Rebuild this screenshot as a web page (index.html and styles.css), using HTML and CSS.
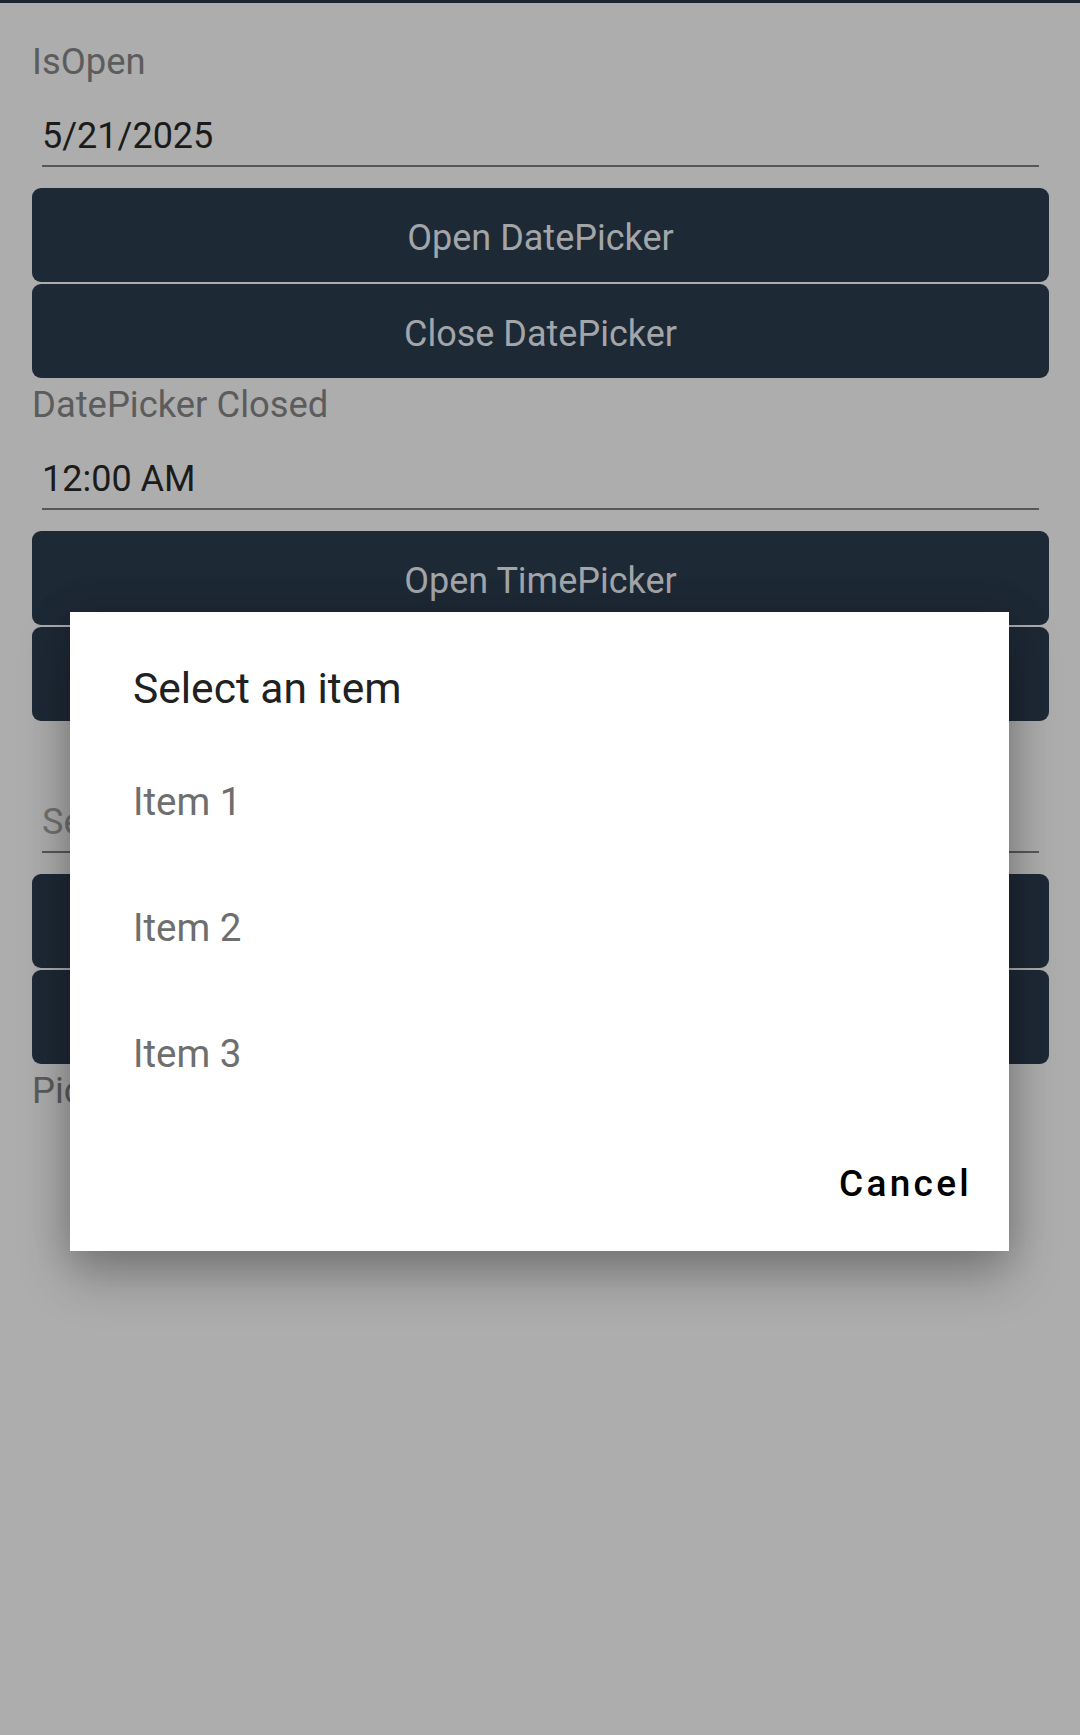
FILE: index.html
```html
<!DOCTYPE html>
<html lang="en">
<head>
<meta charset="utf-8">
<title>Picker sample</title>
<link rel="stylesheet" href="styles.css">
</head>
<body>
<div class="topbar"></div>
<main class="page">
  <div class="label label-first">IsOpen</div>
  <div class="entry">5/21/2025</div>
  <div class="btns">
    <div class="btn">Open DatePicker</div>
    <div class="btn">Close DatePicker</div>
  </div>
  <div class="label">DatePicker Closed</div>
  <div class="entry">12:00 AM</div>
  <div class="btns">
    <div class="btn">Open TimePicker</div>
    <div class="btn">Close TimePicker</div>
  </div>
  <div class="label"></div>
  <div class="entry entry-placeholder">Select an item</div>
  <div class="btns">
    <div class="btn">Open Picker</div>
    <div class="btn">Close Picker</div>
  </div>
  <div class="label">Picker Closed</div>
</main>

<div class="dialog">
  <div class="dialog-title">Select an item</div>
  <div class="dialog-list">
    <div class="dialog-item">Item 1</div>
    <div class="dialog-item">Item 2</div>
    <div class="dialog-item">Item 3</div>
  </div>
  <div class="dialog-actions">
    <div class="dialog-btn">Cancel</div>
  </div>
</div>
</body>
</html>
```
FILE: styles.css
```css
* {
  box-sizing: border-box;
}

html,
body {
  margin: 0;
  padding: 0;
}

body {
  width: 1080px;
  height: 1735px;
  position: relative;
  overflow: hidden;
  background: #adadad;
  font-family: Roboto, "Noto Sans", sans-serif;
}

.topbar {
  height: 3px;
  background: #1b2430;
}

.page {
  padding: 37px 31px 0 32px;
}

.label {
  height: 43px;
  margin-top: 5px;
  padding-top: 1px;
  font-size: 36.4px;
  line-height: 42px;
  color: #5c5c5c;
}

.label-first {
  margin-top: 0;
}

.entry {
  margin: 0 10px 21px;
  padding: 32px 0 7px;
  font-size: 36px;
  line-height: 43px;
  color: #1b1b1b;
  border-bottom: 2px solid #575757;
  white-space: nowrap;
  overflow: hidden;
}

.entry-placeholder {
  color: #717171;
}

.btns {
  display: flex;
  flex-direction: column;
  gap: 2px;
}

.btn {
  height: 94px;
  padding-top: 6px;
  display: flex;
  align-items: center;
  justify-content: center;
  background: #1e2936;
  border-radius: 9px;
  font-size: 36px;
  line-height: 43px;
  color: #a3a6a9;
}

.dialog {
  position: absolute;
  left: 70px;
  top: 612px;
  width: 939px;
  height: 639px;
  padding-top: 52px;
  display: flex;
  flex-direction: column;
  background: #ffffff;
  box-shadow: 0 24px 48px rgba(0, 0, 0, 0.28), 0 0 36px rgba(0, 0, 0, 0.15);
}

.dialog-title {
  padding-left: 63px;
  margin-bottom: 22px;
  font-size: 42.5px;
  line-height: 50px;
  color: #212121;
}

.dialog-list {
  display: flex;
  flex-direction: column;
}

.dialog-item {
  height: 126px;
  padding: 4px 0 0 63px;
  display: flex;
  align-items: center;
  font-size: 38.5px;
  line-height: 47px;
  color: #6e6e6e;
}

.dialog-actions {
  display: flex;
  justify-content: flex-end;
  padding: 22px 16px 21px;
}

.dialog-btn {
  height: 94px;
  padding: 0 21px;
  display: flex;
  align-items: center;
  font-size: 37px;
  line-height: 43px;
  font-weight: 500;
  letter-spacing: 0.0892em;
  color: #000000;
}
```
